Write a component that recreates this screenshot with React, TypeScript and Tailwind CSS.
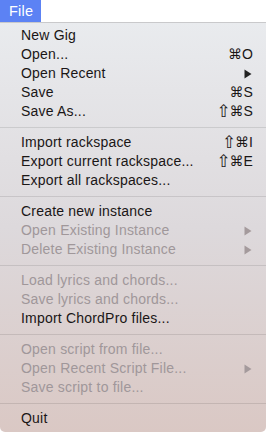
type Item =
  | { kind: "sep" }
  | { kind: "item"; label: string; shortcut?: string[]; submenu?: boolean; disabled?: boolean };

const items: Item[] = [
  { kind: "item", label: "New Gig" },
  { kind: "item", label: "Open...", shortcut: ["⌘", "O"] },
  { kind: "item", label: "Open Recent", submenu: true },
  { kind: "item", label: "Save", shortcut: ["⌘", "S"] },
  { kind: "item", label: "Save As...", shortcut: ["⇧", "⌘", "S"] },
  { kind: "sep" },
  { kind: "item", label: "Import rackspace", shortcut: ["⇧", "⌘", "I"] },
  { kind: "item", label: "Export current rackspace...", shortcut: ["⇧", "⌘", "E"] },
  { kind: "item", label: "Export all rackspaces..." },
  { kind: "sep" },
  { kind: "item", label: "Create new instance" },
  { kind: "item", label: "Open Existing Instance", submenu: true, disabled: true },
  { kind: "item", label: "Delete Existing Instance", submenu: true, disabled: true },
  { kind: "sep" },
  { kind: "item", label: "Load lyrics and chords...", disabled: true },
  { kind: "item", label: "Save lyrics and chords...", disabled: true },
  { kind: "item", label: "Import ChordPro files..." },
  { kind: "sep" },
  { kind: "item", label: "Open script from file...", disabled: true },
  { kind: "item", label: "Open Recent Script File...", submenu: true, disabled: true },
  { kind: "item", label: "Save script to file...", disabled: true },
  { kind: "sep" },
  { kind: "item", label: "Quit" },
];

function Arrow({ disabled }: { disabled?: boolean }) {
  return (
    <svg width="8" height="10" viewBox="0 0 8 10" className={disabled ? "fill-[#a49a9c]" : "fill-[#222]"}>
      <path d="M0.5 0.5 L7.5 5 L0.5 9.5 Z" />
    </svg>
  );
}

function Shortcut({ keys }: { keys: string[] }) {
  return (
    <span className="flex items-center">
      {keys.map((k, i) =>
        k === "⇧" ? (
          <span key={i} className="w-[13px] text-center font-['DejaVu_Sans',sans-serif] text-[17px] leading-[19px]">
            {k}
          </span>
        ) : k === "⌘" ? (
          <span key={i} className="w-[13px] text-center font-['DejaVu_Sans',sans-serif] text-[14px]">
            {k}
          </span>
        ) : (
          <span key={i} className="pl-[1px]">
            {k}
          </span>
        )
      )}
    </span>
  );
}

export default function App() {
  return (
    <div className="w-[266px] h-[432px] overflow-hidden font-['Liberation_Sans',Helvetica,sans-serif] text-[14px] tracking-[0.2px]">
      {/* menu bar */}
      <div className="h-[22px] bg-white flex">
        <div className="w-[41px] h-[22px] bg-[#5c82f4] text-white text-[14.5px] font-medium pl-[9px] leading-[22px]">
          File
        </div>
      </div>
      <div className="h-px bg-[#c9c9cb]" />

      {/* dropdown */}
      <div className="h-[409px] pt-[3px] rounded-b-[5px] bg-gradient-to-b from-[#e9ebee] via-[#ddd9dc] to-[#dac8c4]">
        {items.map((it, i) =>
          it.kind === "sep" ? (
            <div key={i} className="h-[12px] flex items-center">
              <div className="h-px w-full bg-black/10" />
            </div>
          ) : (
            <div
              key={i}
              className={`h-[19px] flex items-center pl-[21px] pr-[13px] ${
                it.disabled ? "text-[#a0979a]" : "text-[#1a1616]"
              }`}
            >
              <span className="flex-1 whitespace-nowrap">{it.label}</span>
              {it.shortcut && <Shortcut keys={it.shortcut} />}
              {it.submenu && (
                <span className="pr-px">
                  <Arrow disabled={it.disabled} />
                </span>
              )}
            </div>
          )
        )}
      </div>
    </div>
  );
}
